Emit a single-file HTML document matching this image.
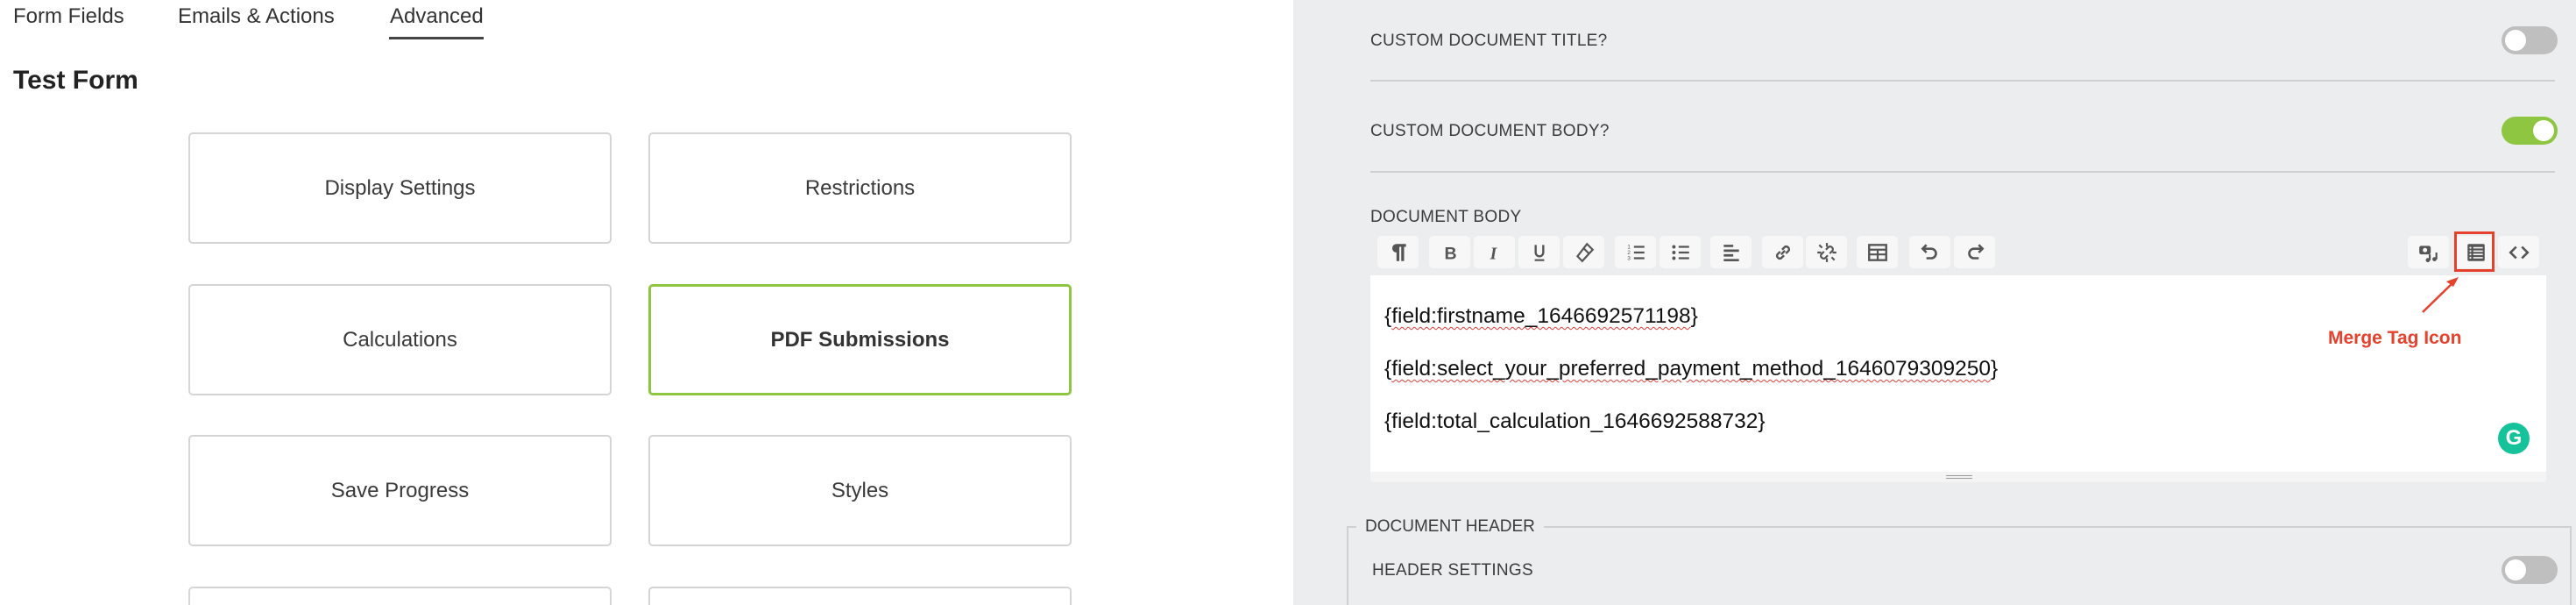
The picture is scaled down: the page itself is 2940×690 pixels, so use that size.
<!DOCTYPE html>
<html><head><meta charset="utf-8"><style>
*{margin:0;padding:0;box-sizing:border-box}
html,body{width:2940px;height:690px;overflow:hidden}
body{background:#fff;font-family:"Liberation Sans",sans-serif;color:#3c3c3c}
#w{position:relative;width:2940px;height:690px;overflow:hidden}
.a{position:absolute}
.tab{font-size:24px;color:#333;top:5px}
.box{position:absolute;width:483px;height:127px;border:2px solid #d5d5d5;border-radius:5px;background:#fff;display:flex;align-items:center;justify-content:center;font-size:24px;color:#3a3a3a}
.right{position:absolute;left:1476px;top:0;width:1464px;height:690px;background:#ecedef}
.lbl{position:absolute;font-size:19px;color:#3c3c3c;letter-spacing:.3px}
.hr{position:absolute;left:1564px;width:1352px;height:2px;background:#cfd0d2}
.tog{position:absolute;width:64px;height:32px;border-radius:16px;background:#bfbfbf}
.tog::after{content:"";position:absolute;left:4px;top:4px;width:24px;height:24px;border-radius:50%;background:#fff}
.tog.on{background:#8fc641}.tog.on::after{left:36px}
.btn{position:absolute;top:269px;width:47px;height:37px;background:#f7f7f7;border-radius:5px;display:flex;align-items:center;justify-content:center}
.btn svg{width:26px;height:26px}
.ed{position:absolute;font-size:24.5px;color:#111;left:1580px}
.ed u{text-decoration:underline wavy #e0403a;text-decoration-thickness:1px;text-underline-offset:4px}
</style></head><body><div id="w">
<div class="a tab" style="left:15px">Form Fields</div>
<div class="a tab" style="left:203px">Emails &amp; Actions</div>
<div class="a tab" style="left:445px">Advanced</div>
<div class="a" style="left:444px;top:42px;width:108px;height:3px;background:#444"></div>
<div class="a" style="left:15px;top:75px;font-size:30px;font-weight:bold;color:#222">Test Form</div>

<div class="box" style="left:215px;top:151px">Display Settings</div>
<div class="box" style="left:740px;top:151px">Restrictions</div>
<div class="box" style="left:215px;top:324px">Calculations</div>
<div class="box" style="left:740px;top:324px;border:3px solid #8fc641;font-weight:bold;color:#333">PDF Submissions</div>
<div class="box" style="left:215px;top:496px">Save Progress</div>
<div class="box" style="left:740px;top:496px">Styles</div>
<div class="box" style="left:215px;top:669px;height:21px;border-bottom:none;border-radius:5px 5px 0 0"></div>
<div class="box" style="left:740px;top:669px;height:21px;border-bottom:none;border-radius:5px 5px 0 0"></div>

<div class="right"></div>
<div class="lbl" style="left:1564px;top:36px">CUSTOM DOCUMENT TITLE?</div>
<div class="tog" style="left:2855px;top:30px"></div>
<div class="hr" style="top:91px"></div>
<div class="lbl" style="left:1564px;top:139px">CUSTOM DOCUMENT BODY?</div>
<div class="tog on" style="left:2855px;top:133px"></div>
<div class="hr" style="top:195px"></div>
<div class="lbl" style="left:1564px;top:237px">DOCUMENT BODY</div>

<div class="btn" style="left:1572px"><svg viewBox="0 0 24 24"><path d="M9 3h11v3h-2v15h-3V6h-2v15h-3v-9a4.5 4.5 0 0 1 0-9z" fill="#555"/></svg></div>
<div class="btn" style="left:1631px"><svg viewBox="0 0 24 24"><text x="6" y="19" font-size="18" font-weight="bold" fill="#555" font-family="Liberation Sans">B</text></svg></div>
<div class="btn" style="left:1682px"><svg viewBox="0 0 24 24"><text x="7" y="19" font-size="18" font-style="italic" font-weight="bold" fill="#555" font-family="Liberation Serif">I</text></svg></div>
<div class="btn" style="left:1733px"><svg viewBox="0 0 24 24"><path d="M8 4v8a4 4 0 0 0 8 0V4" stroke="#555" stroke-width="2.2" fill="none"/><path d="M7 20h10" stroke="#555" stroke-width="2"/></svg></div>
<div class="btn" style="left:1784px"><svg viewBox="0 0 24 24"><path d="M15 3l6 6-11 12-5-5z" stroke="#555" stroke-width="2" fill="none"/><path d="M11 7l6 6" stroke="#555" stroke-width="2"/></svg></div>
<div class="btn" style="left:1843px"><svg viewBox="0 0 24 24"><path d="M10 6h11M10 12h11M10 18h11" stroke="#555" stroke-width="2"/><text x="3" y="8" font-size="6" fill="#555">1</text><text x="3" y="14" font-size="6" fill="#555">2</text><text x="3" y="20" font-size="6" fill="#555">3</text></svg></div>
<div class="btn" style="left:1894px"><svg viewBox="0 0 24 24"><path d="M10 6h11M10 12h11M10 18h11" stroke="#555" stroke-width="2"/><circle cx="5" cy="6" r="1.8" fill="#555"/><circle cx="5" cy="12" r="1.8" fill="#555"/><circle cx="5" cy="18" r="1.8" fill="#555"/></svg></div>
<div class="btn" style="left:1952px"><svg viewBox="0 0 24 24"><path d="M4 5h10M4 10h16M4 15h10M4 20h16" stroke="#555" stroke-width="2.5"/></svg></div>
<div class="btn" style="left:2011px"><svg viewBox="0 0 24 24"><path d="M10 14l4-4M9 11l-3 3a3 3 0 0 0 4 4l3-3M15 13l3-3a3 3 0 0 0-4-4l-3 3" stroke="#555" stroke-width="2.2" fill="none"/></svg></div>
<div class="btn" style="left:2061px"><svg viewBox="0 0 24 24"><path d="M9 11l-3 3a3 3 0 0 0 4 4l3-3M15 13l3-3a3 3 0 0 0-4-4l-3 3M4 4l3 3M20 20l-3-3M12 2v4M12 18v4M2 12h4M18 12h4" stroke="#555" stroke-width="2" fill="none"/></svg></div>
<div class="btn" style="left:2119px"><svg viewBox="0 0 24 24"><rect x="3" y="4" width="18" height="16" fill="none" stroke="#555" stroke-width="2.2"/><path d="M3 9h18M3 14h18M12 9v11" stroke="#555" stroke-width="2"/></svg></div>
<div class="btn" style="left:2179px"><svg viewBox="0 0 24 24"><path d="M8 4L4 8l4 4" stroke="#555" stroke-width="2.4" fill="none"/><path d="M4 8h9a5 5 0 0 1 0 10H8" stroke="#555" stroke-width="2.4" fill="none"/></svg></div>
<div class="btn" style="left:2230px"><svg viewBox="0 0 24 24"><path d="M16 4l4 4-4 4" stroke="#555" stroke-width="2.4" fill="none"/><path d="M20 8h-9a5 5 0 0 0 0 10h5" stroke="#555" stroke-width="2.4" fill="none"/></svg></div>

<div class="btn" style="left:2748px"><svg viewBox="0 0 24 24"><rect x="2" y="5" width="12" height="9" rx="2" fill="#555"/><circle cx="8" cy="9.5" r="2.3" fill="#f7f7f7"/><path d="M13 14v6M20 12v7" stroke="#555" stroke-width="2"/><circle cx="11" cy="20" r="2.2" fill="#555"/><circle cx="18" cy="19" r="2.2" fill="#555"/></svg></div>
<div class="btn" style="left:2802px"><svg viewBox="0 0 24 24"><rect x="3" y="3" width="18" height="18" rx="1.5" fill="#555"/><path d="M9 7h10M9 10.5h10M9 14h10M9 17.5h10" stroke="#f7f7f7" stroke-width="1.5"/><circle cx="6" cy="7" r="1" fill="#f7f7f7"/><circle cx="6" cy="10.5" r="1" fill="#f7f7f7"/><circle cx="6" cy="14" r="1" fill="#f7f7f7"/><circle cx="6" cy="17.5" r="1" fill="#f7f7f7"/></svg></div>
<div class="btn" style="left:2851px"><svg viewBox="0 0 24 24"><path d="M9 6l-6 6 6 6M15 6l6 6-6 6" stroke="#555" stroke-width="2.4" fill="none"/></svg></div>
<div class="a" style="left:2801px;top:264px;width:46px;height:46px;border:3px solid #e5412c"></div>

<div class="a" style="left:1564px;top:314px;width:1342px;height:224px;background:#fff"></div>
<div class="a" style="left:1564px;top:538px;width:1342px;height:12px;background:#f4f4f4;border-radius:0 0 4px 4px"></div>
<div class="a" style="left:2221px;top:542px;width:30px;height:1px;background:#999;box-shadow:0 3px 0 #999"></div>
<div class="ed" style="top:347px">{<u>field:firstname_1646692571198</u>}</div>
<div class="ed" style="top:407px">{<u>field:select_your_preferred_payment_method_1646079309250</u>}</div>
<div class="ed" style="top:467px">{field:total_calculation_1646692588732}</div>
<div class="a" style="left:2851px;top:482px;width:36px;height:36px;border-radius:50%;background:#15c39a;color:#fff;font-size:24px;font-weight:bold;text-align:center;line-height:36px">G</div>
<div class="a" style="left:2657px;top:374px;font-size:21px;font-weight:bold;color:#e5412c">Merge Tag Icon</div>
<svg class="a" style="left:2750px;top:310px" width="60" height="50"><path d="M15 46L50 12" stroke="#e5412c" stroke-width="2.5"/><path d="M56 6l-14 5 8 6z" fill="#e5412c"/></svg>

<div class="a" style="left:1537px;top:600px;width:1398px;height:90px;border:2px solid #cfd0d2;border-bottom:none"></div>
<div class="a" style="left:1548px;top:590px;padding:0 10px;background:#ecedef;font-size:19px;color:#3c3c3c">DOCUMENT HEADER</div>
<div class="lbl" style="left:1566px;top:640px">HEADER SETTINGS</div>
<div class="tog" style="left:2855px;top:634px"></div>
</div></body></html>
